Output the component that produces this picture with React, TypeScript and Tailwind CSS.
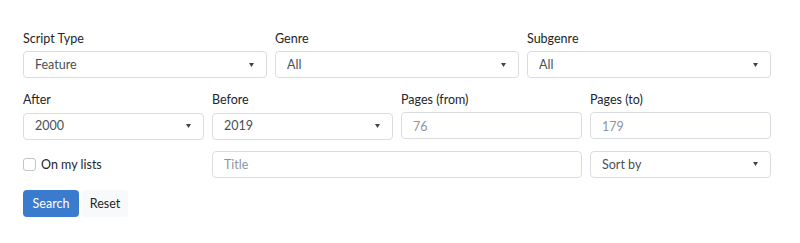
import { useState } from 'react';

function Caret() {
  return (
    <svg
      className="pointer-events-none absolute right-[13px] top-1/2 -translate-y-1/2"
      width="5"
      height="4"
      viewBox="0 0 5 4"
    >
      <path d="M0 0h5L2.5 4z" fill="#444" />
    </svg>
  );
}

interface SelectProps {
  value: string;
  options: string[];
  onChange: (v: string) => void;
}

function Select({ value, options, onChange }: SelectProps) {
  return (
    <div className="relative">
      <select
        value={value}
        onChange={(e) => onChange(e.target.value)}
        className="h-[27px] w-full appearance-none rounded-[4px] border border-[#d9dde2] bg-white pl-[11px] pr-6 pt-[1px] text-[12.5px] text-[#495057] outline-none"
      >
        {options.map((o) => (
          <option key={o}>{o}</option>
        ))}
      </select>
      <Caret />
    </div>
  );
}

function Label({ children }: { children: React.ReactNode }) {
  return <div className="mb-[4px] h-[19px] pt-[1px] text-[12.5px] leading-[19px] text-[#212529]">{children}</div>;
}

const inputClass =
  'h-[27px] w-full rounded-[4px] border border-[#d9dde2] bg-white px-[11px] pt-[1px] text-[12.5px] text-[#495057] placeholder-[#8e959c] outline-none';

export default function App() {
  const [form, setForm] = useState({
    scriptType: 'Feature',
    genre: 'All',
    subgenre: 'All',
    after: '2000',
    before: '2019',
    sort: 'Sort by',
  });

  const set = (key: keyof typeof form) => (v: string) => setForm((prev) => ({ ...prev, [key]: v }));

  return (
    <div className="min-h-screen bg-white pt-[28px] font-['Lato','Open_Sans',sans-serif]">
      <div className="ml-[23px] w-[748px]">
        <div className="grid grid-cols-3 gap-x-[8px]">
          <div>
            <Label>Script Type</Label>
            <Select value={form.scriptType} options={['Feature', 'Short', 'TV Pilot']} onChange={set('scriptType')} />
          </div>
          <div>
            <Label>Genre</Label>
            <Select value={form.genre} options={['All', 'Drama', 'Comedy']} onChange={set('genre')} />
          </div>
          <div>
            <Label>Subgenre</Label>
            <Select value={form.subgenre} options={['All']} onChange={set('subgenre')} />
          </div>
        </div>

        <div className="mt-[11px] grid grid-cols-4 gap-x-[8px]">
          <div>
            <Label>After</Label>
            <Select value={form.after} options={['2000', '2010', '2015']} onChange={set('after')} />
          </div>
          <div>
            <Label>Before</Label>
            <Select value={form.before} options={['2019', '2020', '2021']} onChange={set('before')} />
          </div>
          <div>
            <Label>Pages (from)</Label>
            <input className={inputClass} placeholder="76" />
          </div>
          <div>
            <Label>Pages (to)</Label>
            <input className={inputClass} placeholder="179" />
          </div>
        </div>

        <div className="mt-[11px] grid grid-cols-4 gap-x-[8px]">
          <label className="flex h-[27px] items-center text-[12.5px] text-[#212529]">
            <input
              type="checkbox"
              className="mr-[5px] h-[13px] w-[13px] appearance-none rounded-[3px] border border-[#bfc5cc] bg-white"
            />
            <span className="pt-[2px]">On my lists</span>
          </label>
          <div className="col-span-2">
            <input className={inputClass} placeholder="Title" />
          </div>
          <Select value={form.sort} options={['Sort by', 'Title', 'Pages']} onChange={set('sort')} />
        </div>

        <div className="mt-[12px] flex gap-[3px]">
          <button
            type="submit"
            className="h-[27px] w-[56px] cursor-pointer rounded-[4px] bg-[#3b7bcd] pt-[1px] text-[12.5px] text-white"
          >
            Search
          </button>
          <button
            type="button"
            className="h-[27px] w-[46px] cursor-pointer rounded-[4px] bg-[#f8f9fa] pt-[1px] text-[12.5px] text-[#212529]"
          >
            Reset
          </button>
        </div>
      </div>
    </div>
  );
}
